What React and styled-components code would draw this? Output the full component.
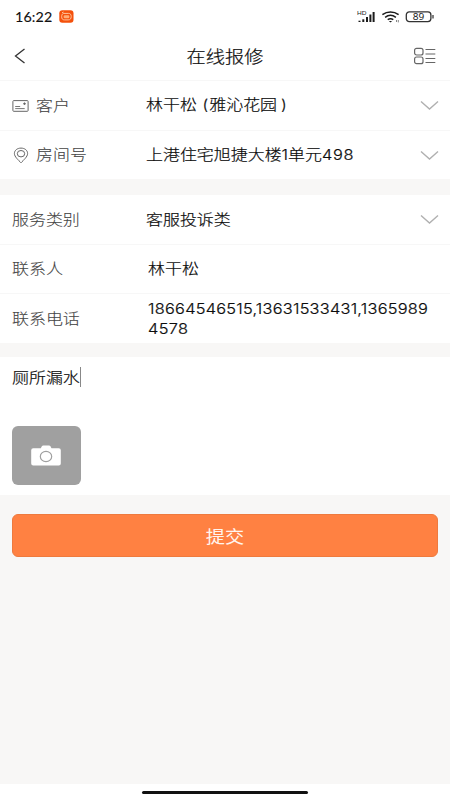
import React from "react";
import styled, { createGlobalStyle } from "styled-components";

const GlobalStyle = createGlobalStyle`
  * { box-sizing: border-box; }
  body {
    margin: 0;
    background: #fff;
    font-family: "Noto Sans CJK SC", sans-serif;
  }
`;

const Screen = styled.div`
  width: 450px;
  height: 800px;
  overflow: hidden;
  display: flex;
  flex-direction: column;
  background: #f8f7f6;
`;

/* Text set slightly wider than the font's natural proportions. */
const Wide = styled.span`
  display: block;
  white-space: pre;
  font-size: ${(p) => p.$size || 15}px;
  line-height: ${(p) => p.$line || 20}px;
  font-weight: ${(p) => p.$weight || 300};
  letter-spacing: ${(p) => p.$gap || 0}px;
  color: ${(p) => p.$color || "#0c0c0c"};
  -webkit-text-stroke: ${(p) => p.$stroke ?? 0.2}px;
  transform: scaleX(${(p) => p.$stretch || 1.13});
  transform-origin: ${(p) => p.$origin || "left"} center;
`;

const Digits = styled.span`
  font-family: Inter, sans-serif;
  font-size: 14.5px;
  font-weight: 300;
  letter-spacing: ${(p) => p.$gap || 0}px;
`;

const StatusBar = styled.header`
  height: 33px;
  flex: none;
  display: flex;
  align-items: center;
  padding: 0 15px 0 15px;
  background: #fff;
`;

const Clock = styled.div`
  width: 44px;
  font-family: Lato, sans-serif;
`;

const StatusIcons = styled.div`
  margin-left: auto;
  display: flex;
  gap: 4px;
`;

const NavBar = styled.nav`
  height: 48px;
  flex: none;
  display: grid;
  grid-template-columns: 40px 1fr 40px;
  align-items: center;
  padding: 0 14px 1px 12px;
  background: #fff;
  border-bottom: 1px solid #f7f7f7;
`;

const Title = styled.h1`
  margin: 0;
  padding: 0 0 1px 1px;
  display: flex;
  justify-content: center;
`;

const NavButton = styled.button`
  display: flex;
  justify-content: ${(p) => (p.$end ? "flex-end" : "flex-start")};
  padding: 0;
  border: 0;
  background: none;
`;

const Group = styled.section`
  flex: none;
  background: #fff;
  margin-bottom: ${(p) => p.$after}px;
`;

const Row = styled.div`
  height: ${(p) => p.$height || 49}px;
  display: flex;
  align-items: center;
  padding: 0 11px 0 12px;
  & + & { border-top: 1px solid #f7f7f7; }
`;

const Label = styled.div`
  width: ${(p) => (p.$inset ? 135.5 : 133.5)}px;
  flex: none;
  display: flex;
  align-items: center;
  gap: 7px;
  ${Wide} { margin-bottom: 2px; }
`;

const Value = styled.div`
  flex: 1;
  min-width: 0;
  display: flex;
  flex-direction: column;
  align-items: flex-start;
  padding-bottom: ${(p) => (p.$low ? 1 : 2)}px;
`;

const Description = styled.section`
  height: 138px;
  flex: none;
  padding: 10px 12px;
  background: #fff;
`;

const Entry = styled.div`
  display: flex;
  height: 20px;
  width: 68.5px;
  border-right: 1px solid #888;
`;

const PhotoButton = styled.button`
  display: flex;
  align-items: center;
  justify-content: center;
  width: 69px;
  height: 59px;
  margin: 39px 0 0 -0.5px;
  padding: 0;
  border: 0;
  border-radius: 6px;
  background: #a0a0a0;
`;

const SubmitButton = styled.button`
  flex: none;
  display: flex;
  align-items: center;
  justify-content: center;
  height: 43px;
  margin: 19px 12px 0;
  padding: 0;
  border: 1px solid #ee7a3e;
  border-radius: 6px;
  background: #ff8142;
  font-family: inherit;
`;

const HomeBar = styled.footer`
  height: 16px;
  flex: none;
  margin-top: auto;
  display: flex;
  justify-content: center;
  align-items: center;
  background: #fff;
  &::after {
    content: "";
    width: 166px;
    height: 3px;
    border-radius: 2px;
    background: #111;
  }
`;

const Chevron = () => (
  <svg width="19" height="11" viewBox="0 0 19 11" fill="none" stroke="#b0b0b0" strokeWidth="1.4">
    <path d="M1 1.5 9.5 9 18 1.5" />
  </svg>
);

const CardIcon = () => (
  <svg width="17" height="12" viewBox="0 0 17 12" fill="none" stroke="#666" strokeWidth="1">
    <rect x=".9" y=".6" width="15.2" height="10.7" rx=".8" />
    <path d="M3.2 6.5h5M3.2 8.6h9.5" stroke="#777" />
    <circle cx="12.5" cy="3.7" r=".8" fill="#555" />
  </svg>
);

const PinIcon = () => (
  <svg width="17" height="17" viewBox="0 0 17 17" fill="none" stroke="#666" strokeWidth="1">
    <path d="M9 15.8C6.4 13 2.4 9.8 2.4 6.5 2.4 3.3 5.3 1.1 9 1.1s6.6 2.2 6.6 5.4c0 3.3-4 6.5-6.6 9.3Z" />
    <ellipse cx="9" cy="6.7" rx="3.7" ry="3.2" />
  </svg>
);

const BackIcon = () => (
  <svg width="14" height="18" viewBox="0 0 14 18" fill="none" stroke="#333" strokeWidth="1.3">
    <path d="M12.5 2 3.5 9l9 7" />
  </svg>
);

const ListIcon = () => (
  <svg width="23" height="18" viewBox="0 0 23 18" fill="none" stroke="#666" strokeWidth="1.2">
    <rect x="1.6" y="1.3" width="8.4" height="6.7" rx="2" />
    <rect x="1.6" y="10" width="8.4" height="6.7" rx="2" />
    <path d="M12.5 2.5h9.8M12.5 7h9.8M12.5 11.5h9.8M12.5 15.5h9.8" />
  </svg>
);

const AppBadge = () => (
  <svg width="15" height="13" viewBox="0 0 15 13">
    <rect x=".3" y=".2" width="14.2" height="12.5" rx="3" fill="#f4510c" />
    <path d="M3 2.8 4.5 2M4.2 3.4h5.2c1.9 0 2.8 1 2.8 3.2s-1 3.3-3 3.3H5.6c-2 0-2.9-1-2.9-3.1 0-1.9.5-2.8 1.5-3.4Z" fill="none" stroke="#ffd0ad" strokeWidth=".9" />
    <rect x="4.6" y="5.2" width="5.8" height="3" rx="1.2" fill="#ffad77" />
  </svg>
);

const SignalIcon = () => (
  <svg width="20" height="14" viewBox="0 0 20 14" fill="#1b1b1b">
    <text x="0" y="5.3" fontSize="5.6" fontFamily="Liberation Sans" textLength="9.5" lengthAdjust="spacingAndGlyphs">HD</text>
    <rect x="1.5" y="10.7" width="2" height="1.3" />
    <rect x="5.3" y="9.3" width="2" height="2.7" />
    <rect x="9" y="7" width="2" height="5" />
    <rect x="12.4" y="4.5" width="2" height="7.5" />
    <rect x="15.6" y="2" width="2" height="10" />
  </svg>
);

const WifiIcon = () => (
  <svg width="20" height="14" viewBox="0 0 20 14" fill="none" stroke="#1b1b1b" strokeWidth="1.5">
    <path d="M1.4 4.6c4.9-3.5 11.3-3.5 16.2 0M4.1 7.3c3.3-2.4 7.5-2.4 10.8 0M6.7 9.7c1.8-1.2 3.8-1.2 5.6 0" />
    <path d="M7.9 11h3.2l-1.6 1.4Z" fill="#1b1b1b" stroke="none" />
    <path d="M15.5 12v-2M17.3 10v2.4" strokeWidth=".8" stroke="#666" />
  </svg>
);

const BatteryIcon = () => (
  <svg width="30" height="14" viewBox="0 0 30 14">
    <rect x="1.3" y="1.9" width="24.6" height="9.7" rx="3" fill="none" stroke="#333" strokeWidth="1.3" />
    <path d="M28 5v3.5" stroke="#555" strokeWidth="1.5" />
    <text x="7.8" y="9.7" fontSize="8.3" fontFamily="Noto Sans" fill="#222" textLength="11.5" lengthAdjust="spacingAndGlyphs">89</text>
  </svg>
);

const CameraIcon = () => (
  <svg width="30" height="21" viewBox="0 0 30 21">
    <path d="M2.2 3.2h7.6L11 1.1Q11.4.5 12.2.5h5.9q.8 0 1.2.6l1.2 2.1h7.3q2 0 2 2v13.3q0 2-2 2H2.2q-2 0-2-2V5.2q0-2 2-2Z" fill="#fff" />
    <ellipse cx="15" cy="11.5" rx="5.7" ry="5.1" fill="none" stroke="#a0a0a0" strokeWidth="1.2" />
  </svg>
);

const Name = ({ children }) => <Wide $color="#444" $stroke={0.1}>{children}</Wide>;

export default function App() {
  return (
    <Screen>
      <GlobalStyle />
      <StatusBar>
        <Clock>
          <Wide $size={13} $weight={400} $stroke={0.1} $stretch={1.1} $gap={0.1} $color="#111">16:22</Wide>
        </Clock>
        <AppBadge />
        <StatusIcons>
          <SignalIcon />
          <WifiIcon />
          <BatteryIcon />
        </StatusIcons>
      </StatusBar>
      <NavBar>
        <NavButton aria-label="返回"><BackIcon /></NavButton>
        <Title><Wide $size={17} $line={22} $origin="center">在线报修</Wide></Title>
        <NavButton $end aria-label="列表"><ListIcon /></NavButton>
      </NavBar>

      <Group $after={16}>
        <Row>
          <Label><CardIcon /><Name>客户</Name></Label>
          <Value><Wide>林干松<Digits $gap={0.9}> (</Digits>雅沁花园<Digits $gap={-0.5}> )</Digits></Wide></Value>
          <Chevron />
        </Row>
        <Row>
          <Label><PinIcon /><Name>房间号</Name></Label>
          <Value><Wide>上港住宅旭捷大楼<Digits>1</Digits>单元<Digits $gap={0.6}>498</Digits></Wide></Value>
          <Chevron />
        </Row>
      </Group>

      <Group $after={14}>
        <Row>
          <Label><Name>服务类别</Name></Label>
          <Value><Wide>客服投诉类</Wide></Value>
          <Chevron />
        </Row>
        <Row>
          <Label $inset><Name>联系人</Name></Label>
          <Value><Wide>林干松</Wide></Value>
        </Row>
        <Row $height={50}>
          <Label $inset><Name>联系电话</Name></Label>
          <Value $low>
            <Wide $line={19}><Digits $gap={0.21}>18664546515,13631533431,1365989</Digits></Wide>
            <Wide $line={19}><Digits $gap={0.3}>4578</Digits></Wide>
          </Value>
        </Row>
      </Group>

      <Description>
        <Entry><Wide>厕所漏水</Wide></Entry>
        <PhotoButton aria-label="添加照片"><CameraIcon /></PhotoButton>
      </Description>

      <SubmitButton>
        <Wide $size={17} $line={22} $weight={400} $stroke={0} $color="#fff5ee" $origin="center">提交</Wide>
      </SubmitButton>
      <HomeBar />
    </Screen>
  );
}
